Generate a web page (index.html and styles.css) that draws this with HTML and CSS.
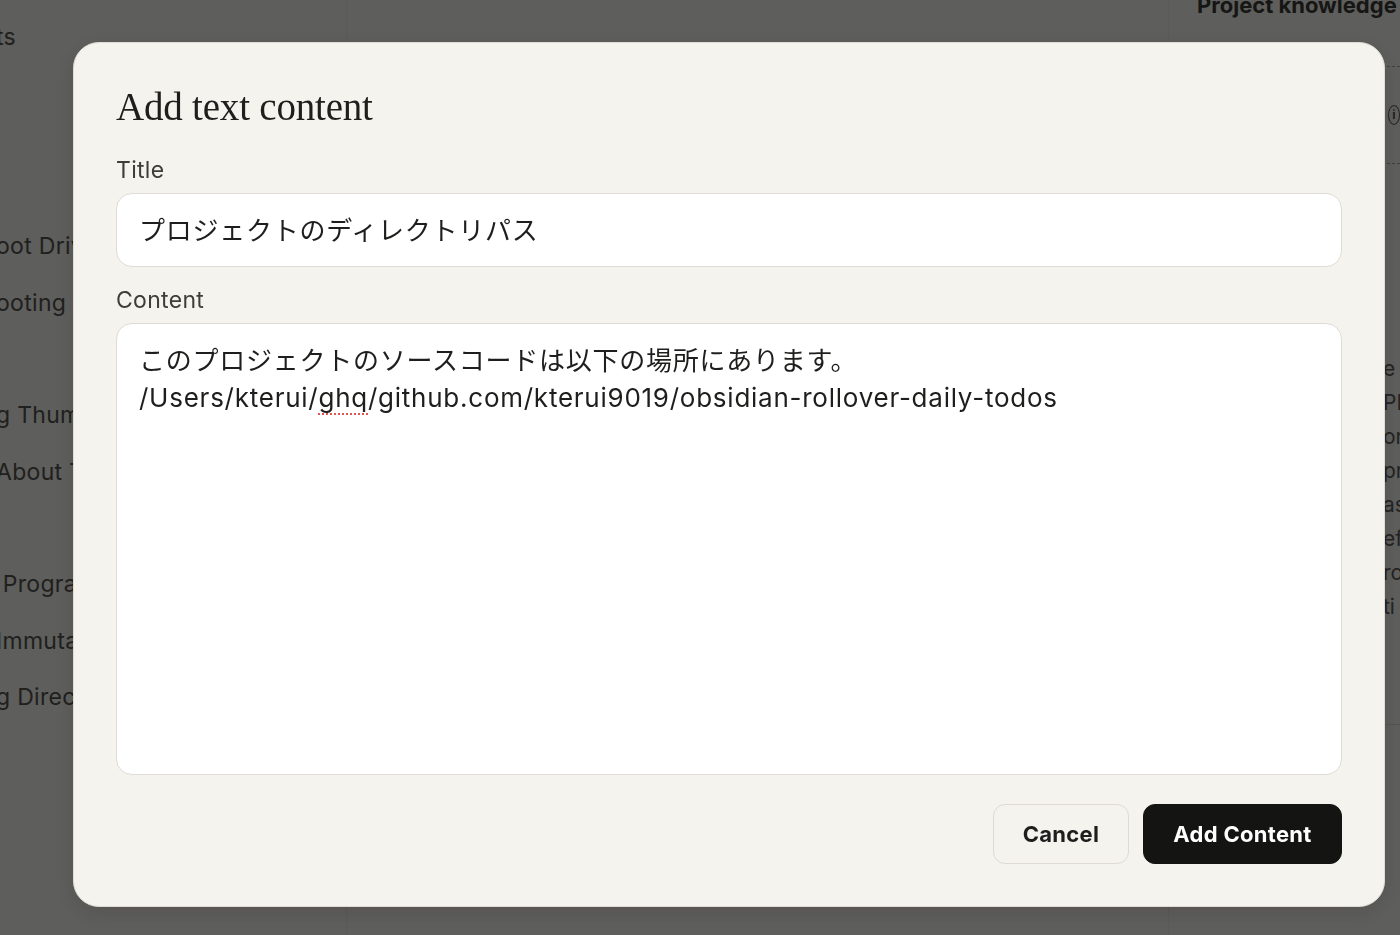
FILE: index.html
```html
<!DOCTYPE html>
<html lang="ja">
<head>
<meta charset="utf-8">
<title>Add text content</title>
<link rel="stylesheet" href="styles.css">
</head>
<body>
<div class="page">
  <aside class="sidebar">
    <div class="side-item first">ts</div>
    <div class="side-group">
      <div class="side-item">oot Driv</div>
      <div class="side-item">ooting</div>
    </div>
    <div class="side-group">
      <div class="side-item">g Thum</div>
      <div class="side-item">About T</div>
    </div>
    <div class="side-group">
      <div class="side-item">&nbsp;Progra</div>
      <div class="side-item">Immuta</div>
      <div class="side-item">g Direc</div>
    </div>
  </aside>
  <main class="main"></main>
  <aside class="knowledge">
    <h2 class="knowledge-title">Project knowledge</h2>
    <div class="dash"></div>
    <div class="info-row"><span class="info-icon">i</span></div>
    <div class="dash"></div>
    <div class="know-text">
      <div>e</div>
      <div>PD</div>
      <div>or</div>
      <div>pr</div>
      <div>as</div>
      <div>ef</div>
      <div>ro</div>
      <div>ti</div>
    </div>
    <div class="solid"></div>
  </aside>
</div>

<div class="overlay">
  <div class="modal" role="dialog" aria-labelledby="dlg-title">
    <h1 class="modal-title" id="dlg-title">Add text content</h1>
    <label class="field-label">Title</label>
    <div class="text-input" role="textbox">プロジェクトのディレクトリパス</div>
    <label class="field-label label-gap">Content</label>
    <div class="text-area" role="textbox" aria-multiline="true">このプロジェクトのソースコードは以下の場所にあります。<br>/Users/kterui/<span class="spell">ghq</span>/github.com/kterui9019/obsidian-rollover-daily-todos</div>
    <div class="actions">
      <button class="btn btn-cancel">Cancel</button>
      <button class="btn btn-primary">Add Content</button>
    </div>
  </div>
</div>
</body>
</html>
```

FILE: styles.css
```css
* { box-sizing: border-box; }
html, body {
  margin: 0;
  height: 100%;
}
body {
  background: #f5f4ee;
  font-family: "Inter", "Noto Sans CJK JP", sans-serif;
  color: #1f1e1d;
  overflow: hidden;
}

/* background page */
.page {
  display: flex;
  height: 935px;
}
.sidebar {
  width: 347px;
  border-right: 1px solid #ebe9e2;
  padding-top: 22px;
  overflow: hidden;
  white-space: nowrap;
}
.side-item {
  font-size: 23px;
  line-height: 30px;
  height: 56.5px;
  color: #54534f;
  margin-left: -4px;
  letter-spacing: 0.3px;
}
.side-item.first { height: 30px; }
.side-group { margin-top: 179px; }
.side-group + .side-group { margin-top: 56px; }

.main { flex: 1; }

.knowledge {
  width: 232px;
  border-left: 1px solid #ebe9e2;
  padding-left: 28px;
  overflow: hidden;
  white-space: nowrap;
}
.knowledge-title {
  margin: -10px 0 0;
  font-size: 22px;
  line-height: 30px;
  font-weight: 700;
  color: #3a3a37;
}
.dash {
  border-top: 1px dashed #a9a8a2;
  margin-top: 46px;
}
.info-row {
  height: 96px;
  display: flex;
  align-items: center;
  padding-left: 191px;
}
.info-icon {
  width: 20px;
  height: 20px;
  border: 1.5px solid #5c5b57;
  border-radius: 50%;
  font-size: 12px;
  line-height: 17px;
  text-align: center;
  color: #5c5b57;
  font-weight: 700;
}
.info-row + .dash { margin-top: 0; }
.know-text {
  margin-top: 188px;
  padding-left: 186px;
  font-size: 21px;
  line-height: 34px;
  color: #5e5d59;
}
.solid {
  margin-top: 100px;
  border-top: 1px solid #dcdad2;
}

/* overlay */
.overlay {
  position: fixed;
  inset: 0;
  background: rgba(0, 0, 0, 0.615);
  display: flex;
  padding: 42px 15px 28px 73px;
}
.modal {
  flex: 1;
  display: flex;
  flex-direction: column;
  background: #f4f3ed;
  border-radius: 26px;
  border: 1px solid #dedcd4;
  box-shadow: 0 6px 24px rgba(0, 0, 0, 0.12);
  padding: 42px 42px 42px;
}
.modal-title {
  margin: 0;
  font-family: "Liberation Serif", "DejaVu Serif", serif;
  font-weight: 400;
  font-size: 39px;
  line-height: 44px;
  color: #1f1e1d;
  letter-spacing: -0.2px;
}
.field-label {
  display: block;
  margin-top: 29px;
  font-size: 23px;
  line-height: 24px;
  color: #3d3d3a;
  letter-spacing: 0.3px;
}
.field-label.label-gap { margin-top: 21px; }
.text-input,
.text-area {
  margin-top: 11px;
  background: #ffffff;
  border: 1.5px solid #dedcd5;
  border-radius: 16px;
  font-size: 26px;
  letter-spacing: 0.75px;
  color: #1f1e1d;
}
.text-input {
  height: 74px;
  padding: 0 22px 3px;
  display: flex;
  align-items: center;
}
.text-area {
  flex: 1;
  padding: 18px 22px;
  line-height: 37px;
}
.spell {
  text-decoration: underline dotted #e0554f;
  text-decoration-thickness: 2px;
  text-underline-offset: 6px;
}
.actions {
  margin-top: 29px;
  display: flex;
  justify-content: flex-end;
  gap: 14px;
}
.btn {
  height: 60px;
  border-radius: 12px;
  font-family: "Inter", sans-serif;
  font-size: 22px;
  font-weight: 700;
  letter-spacing: 0.3px;
  cursor: pointer;
}
.btn-cancel {
  width: 136px;
  background: transparent;
  border: 1px solid #dddbd3;
  color: #1f1e1d;
}
.btn-primary {
  width: 199px;
  background: #141413;
  border: 1px solid #141413;
  color: #ffffff;
}
```
